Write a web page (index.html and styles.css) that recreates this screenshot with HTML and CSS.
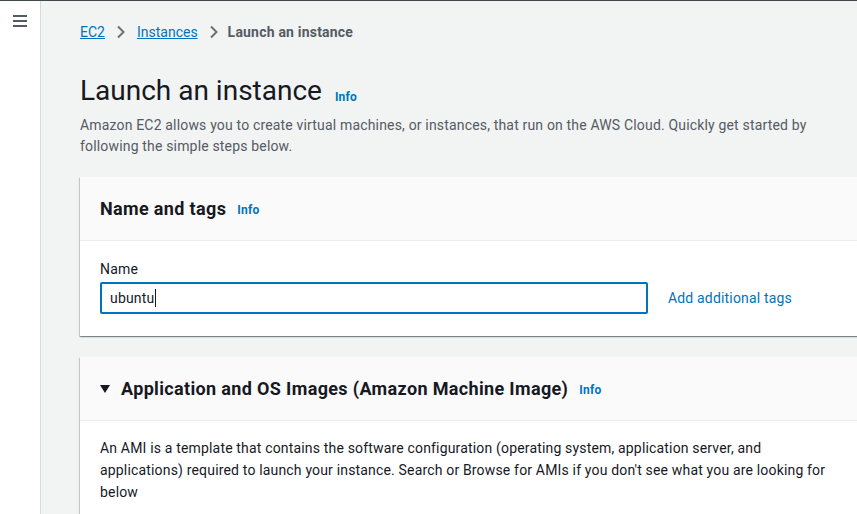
FILE: index.html
```html
<!DOCTYPE html>
<html>
<head>
<meta charset="utf-8">
<link rel="stylesheet" href="styles.css">
</head>
<body>
<div class="app">
  <aside class="sidebar">
    <svg class="menu" width="14" height="12" viewBox="0 0 14 12"><rect x="0" y="0" width="14" height="2" fill="#545b64"/><rect x="0" y="5" width="14" height="2" fill="#545b64"/><rect x="0" y="10" width="14" height="2" fill="#545b64"/></svg>
  </aside>
  <main class="main">
    <nav class="crumbs">
      <a href="#">EC2</a>
      <svg class="chev" width="10" height="14" viewBox="0 0 10 14"><path d="M2 1.5 L7.5 7 L2 12.5" fill="none" stroke="#687078" stroke-width="2"/></svg>
      <a href="#">Instances</a>
      <svg class="chev" width="10" height="14" viewBox="0 0 10 14"><path d="M2 1.5 L7.5 7 L2 12.5" fill="none" stroke="#687078" stroke-width="2"/></svg>
      <span class="current">Launch an instance</span>
    </nav>
    <h1 class="title">Launch an instance <span class="info">Info</span></h1>
    <p class="desc">Amazon EC2 allows you to create virtual machines, or instances, that run on the AWS Cloud. Quickly get started by following the simple steps below.</p>

    <section class="card">
      <header class="card-head"><h2>Name and tags</h2><span class="info">Info</span></header>
      <div class="card-body">
        <label class="label">Name</label>
        <div class="row">
          <div class="input">ubuntu<span class="caret"></span></div>
          <a class="link" href="#">Add additional tags</a>
        </div>
      </div>
    </section>

    <section class="card card2">
      <header class="card-head"><span class="tri"></span><h2>Application and OS Images (Amazon Machine Image)</h2><span class="info">Info</span></header>
      <div class="card-body">
        <p class="text">An AMI is a template that contains the software configuration (operating system, application server, and applications) required to launch your instance. Search or Browse for AMIs if you don't see what you are looking for below</p>
      </div>
    </section>
  </main>
</div>
</body>
</html>
```
FILE: styles.css
```css
html, body { margin: 0; padding: 0; }
body {
  width: 857px; height: 514px; overflow: hidden;
  font-family: Roboto, "Noto Sans", sans-serif;
  background: #f2f3f3;
  color: #16191f;
  border-top: 1px solid #414750;
  box-sizing: border-box;
  letter-spacing: 0.17px;
}
.app { display: flex; height: 513px; }
.sidebar {
  width: 41px; flex: none; background: #fff;
  border-right: 1px solid #d5dbdb;
  box-sizing: border-box;
  padding: 14px 0 0 13px;
}
.menu { display: block; }
.main { flex: 1; padding: 0 0 0 39px; min-width: 0; }
.crumbs {
  display: flex; align-items: center; gap: 11px;
  height: 22px; margin-top: 20px; font-size: 14px; letter-spacing: 0;
}
.crumbs a { color: #0073bb; text-decoration: underline; }
.crumbs .chev { display: block; }
.crumbs .current { color: #545b64; font-weight: 700; letter-spacing: 0.2px; margin-left: -2px; }
.title {
  margin: 30px 0 0; font-size: 28px; font-weight: 400; line-height: 36px; letter-spacing: 0;
}
.info { font-size: 12px; font-weight: 700; color: #0073bb; margin-left: 10px; letter-spacing: 0.2px; position: relative; top: 2px; }
.title .info { margin-left: 6px; top: 1px; }
.desc { margin: 1px 0 0; font-size: 14px; line-height: 21px; color: #545b64; width: 740px; }
.card {
  margin-top: 20px; width: 800px; background: #fff;
  box-shadow: 0 1px 1px 0 rgba(0,28,36,.3), 1px 1px 1px 0 rgba(0,28,36,.15), -1px 1px 1px 0 rgba(0,28,36,.15);
}
.card-head {
  display: flex; align-items: center; height: 64px; box-sizing: border-box;
  padding: 0 20px; background: #fafafa; border-bottom: 1px solid #eaeded;
}
.card-head h2 { margin: 0; font-size: 18px; font-weight: 700; letter-spacing: 0.35px; }
.card-head .info { margin-left: 11px; top: 1px; }
.card-body { padding: 18px 20px 22px; }
.label { display: block; font-size: 14px; line-height: 20px; }
.row { display: flex; align-items: center; gap: 20px; margin-top: 3px; }
.input {
  width: 548px; height: 32px; box-sizing: border-box;
  border: 2px solid #0073bb; border-radius: 2px;
  padding: 0 8px; font-size: 14px; line-height: 28px; color: #16191f;
  display: flex; align-items: center;
}
.caret { display: inline-block; width: 1px; height: 18px; background: #16191f; margin-left: 1px; }
.link { color: #0073bb; text-decoration: none; font-size: 14px; }
.card2 { margin-top: 21px; }
.tri {
  width: 0; height: 0; border-left: 5px solid transparent; border-right: 5px solid transparent;
  border-top: 8px solid #16191f; margin-right: 11px;
}
.card2 .card-body { padding-top: 16px; }
.text { margin: 0; font-size: 14px; line-height: 22px; color: #16191f; width: 730px; }
```
